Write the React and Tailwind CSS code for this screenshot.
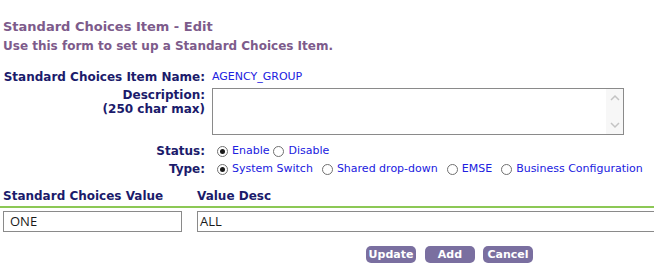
import React from "react";

const font = "font-['DejaVu_Sans',Verdana,sans-serif]";

function Radio({ checked }) {
  return (
    <span className="inline-flex h-[11px] w-[11px] shrink-0 items-center justify-center rounded-full border border-[#707070] bg-white">
      {checked && <span className="h-[5px] w-[5px] rounded-full bg-[#1a1a1a]" />}
    </span>
  );
}

function Option({ checked, label, className = "" }) {
  return (
    <label className={`inline-flex items-center gap-[4px] ${className}`}>
      <Radio checked={checked} />
      <span className="text-[11px] leading-[14px] text-[#2020e0]">{label}</span>
    </label>
  );
}

function Row({ label, children, className = "" }) {
  return (
    <div className={`flex ${className}`}>
      <div className="w-[205px] shrink-0 text-right text-[12px] font-bold leading-[14px] text-[#1b1b6b]">
        {label}
      </div>
      <div className="ml-[7px] flex-1">{children}</div>
    </div>
  );
}

export default function App() {
  return (
    <div className={`relative h-[271px] w-[654px] overflow-hidden bg-white ${font}`}>
      <div className="px-[3px] pt-[18px] font-bold text-[#7d5b8b]">
        <div className="h-[18px] text-[13px] leading-[18px]">Standard Choices Item - Edit</div>
        <div className="h-[20px] text-[12px] leading-[20px]">Use this form to set up a Standard Choices Item.</div>
      </div>

      <Row label="Standard Choices Item Name:" className="mt-[14px] h-[14px] items-center">
        <span className="block text-[11px] leading-[14px] text-[#2020e0]">AGENCY_GROUP</span>
      </Row>

      <Row label={<><div>Description:</div><div>(250 char max)</div></>} className="mt-[4px]">
        <div className="relative h-[47px] w-[412px] border border-[#8a8a8a] bg-white">
          <div className="absolute right-0 top-0 flex h-full w-[17px] flex-col items-center justify-between bg-[#f7f7f7] py-[5px]">
            <svg width="10" height="7" viewBox="0 0 10 7"><path d="M1 6 L5 2 L9 6" fill="none" stroke="#c4c4c4" strokeWidth="1.5" /></svg>
            <svg width="10" height="7" viewBox="0 0 10 7"><path d="M1 1 L5 5 L9 1" fill="none" stroke="#c4c4c4" strokeWidth="1.5" /></svg>
          </div>
        </div>
      </Row>

      <Row label="Status:" className="mt-[9px] h-[14px] items-center">
        <div className="flex h-[14px] items-center pl-[5px]">
          <Option checked label="Enable" />
          <Option label="Disable" className="ml-[4px]" />
        </div>
      </Row>

      <Row label="Type:" className="mt-[4px] h-[14px] items-center">
        <div className="flex h-[14px] items-center pl-[5px]">
          <Option checked label="System Switch" />
          <Option label="Shared drop-down" className="ml-[9px]" />
          <Option label="EMSE" className="ml-[9px]" />
          <Option label="Business Configuration" className="ml-[9px]" />
        </div>
      </Row>

      <div className="mt-[13px] flex h-[14px] px-[3px] text-[12px] font-bold leading-[14px] text-[#1b1b6b]">
        <div className="w-[194px]">Standard Choices Value</div>
        <div>Value Desc</div>
      </div>
      <div className="mt-[3px] h-[2px] w-full bg-[#8cc855]" />

      <div className="mt-[3px] flex font-['Open_Sans',sans-serif] text-[13px] text-[#1a1a1a]">
        <div className="ml-[3px] flex h-[21px] w-[179px] shrink-0 items-center border border-[#8a8a8a] pl-[6px]">ONE</div>
        <div className="ml-[15px] flex h-[21px] w-[470px] shrink-0 items-center border border-[#8a8a8a] pl-[2px]">ALL</div>
      </div>

      <div className="mt-[14px] flex pl-[366px] text-[11px] font-bold leading-[17px] text-white">
        <button className="h-[17px] w-[50px] rounded-[5px] bg-[#7a6fa0]">Update</button>
        <button className="ml-[9px] h-[17px] w-[50px] rounded-[5px] bg-[#7a6fa0]">Add</button>
        <button className="ml-[8px] h-[17px] w-[50px] rounded-[5px] bg-[#7a6fa0]">Cancel</button>
      </div>
    </div>
  );
}
